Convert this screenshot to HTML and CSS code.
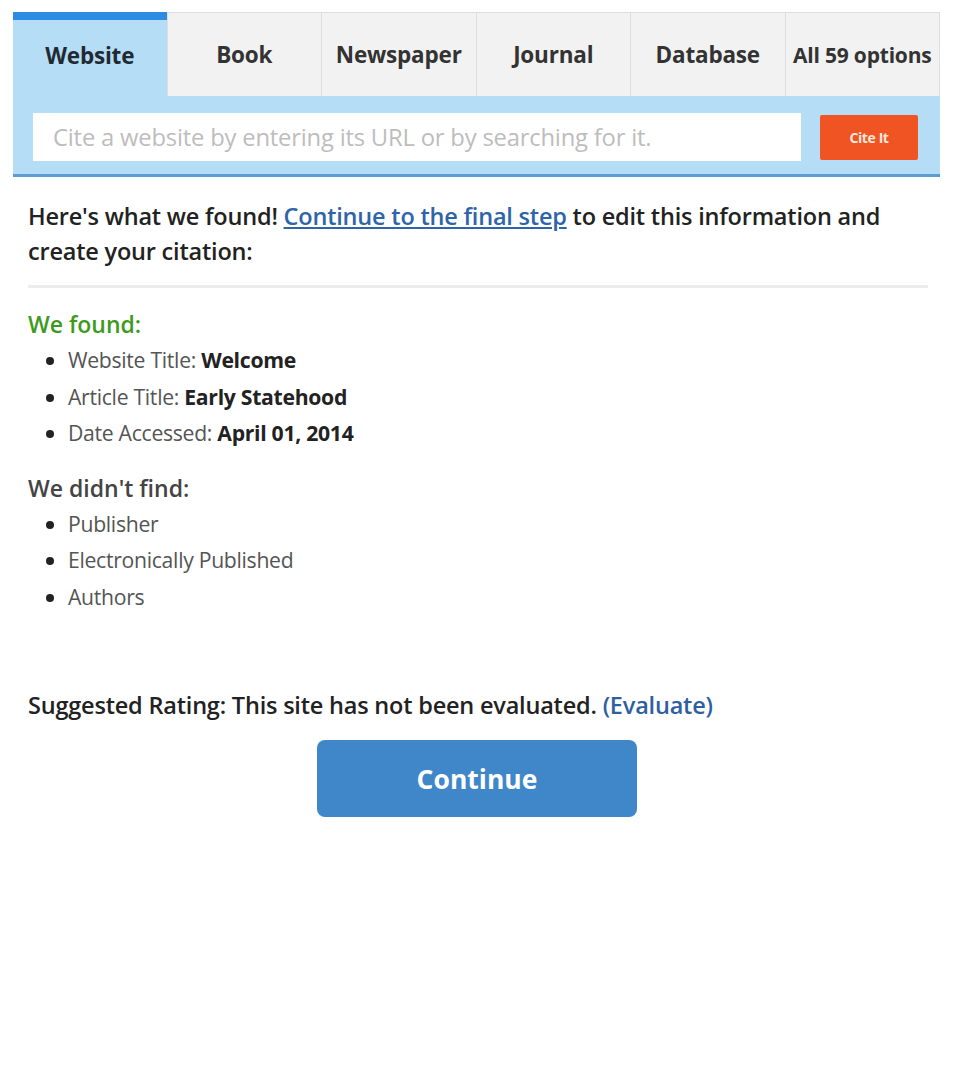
FILE: index.html
```html
<!DOCTYPE html>
<html>
<head>
<meta charset="utf-8">
<link rel="stylesheet" href="styles.css">
</head>
<body>
<div class="page">
  <div class="widget">
    <div class="tabs">
      <div class="tab active">Website</div>
      <div class="tab">Book</div>
      <div class="tab">Newspaper</div>
      <div class="tab">Journal</div>
      <div class="tab">Database</div>
      <div class="tab last">All 59 options</div>
    </div>
    <div class="panel">
      <div class="input">Cite a website by entering its URL or by searching for it.</div>
      <div class="cite">Cite It</div>
    </div>
  </div>
  <div class="content">
    <p class="intro">Here's what we found! <a href="#">Continue to the final step</a> to edit this information and create your citation:</p>
    <hr class="divider">
    <h3 class="found">We found:</h3>
    <ul class="list">
      <li>Website Title: <b>Welcome</b></li>
      <li>Article Title: <b>Early Statehood</b></li>
      <li>Date Accessed: <b>April 01, 2014</b></li>
    </ul>
    <h3 class="notfound">We didn't find:</h3>
    <ul class="list">
      <li>Publisher</li>
      <li>Electronically Published</li>
      <li>Authors</li>
    </ul>
    <p class="rating">Suggested Rating: This site has not been evaluated. <span class="eval">(Evaluate)</span></p>
    <div class="btnrow"><div class="continue">Continue</div></div>
  </div>
</div>
</body>
</html>
```
FILE: styles.css
```css
html, body {
  margin: 0;
  padding: 0;
  background: #fff;
}
body {
  font-family: "Open Sans", "Liberation Sans", sans-serif;
  color: #222;
}
.page {
  padding: 12px 40px 0 13px;
}
.widget {
  width: 927px;
}
.tabs {
  display: flex;
  height: 84px;
}
.tab {
  flex: 1;
  display: flex;
  align-items: center;
  justify-content: center;
  background: #f2f2f2;
  border-top: 1px solid #dedede;
  border-left: 1px solid #dedede;
  font-weight: 700;
  font-size: 22.5px;
  color: #333;
  letter-spacing: -0.2px;
}
.tab.last {
  border-right: 1px solid #dedede;
  font-size: 21px;
}
.tab.active {
  background: #b5ddf5;
  border-top: 8px solid #2d8be3;
  border-left: none;
  padding-bottom: 6px;
  color: #1f2a33;
}
.panel {
  display: flex;
  align-items: center;
  gap: 19px;
  background: #b5ddf5;
  padding: 17px 22px 13px 20px;
  border-bottom: 3px solid #5d9bd3;
}
.input {
  flex: 1;
  height: 48px;
  background: #fff;
  display: flex;
  align-items: center;
  padding-left: 20px;
  font-size: 23.8px;
  color: #bdbdbd;
  letter-spacing: -0.2px;
}
.cite {
  width: 98px;
  height: 45px;
  background: #f05423;
  border-radius: 2px;
  color: #fde8de;
  font-weight: 700;
  font-size: 14px;
  letter-spacing: -0.4px;
  display: flex;
  align-items: center;
  justify-content: center;
}
.content {
  padding: 0 12px 0 15px;
}
.intro {
  margin: 22px 0 0;
  font-size: 23.5px;
  line-height: 35px;
  font-weight: 600;
  color: #222;
  letter-spacing: -0.2px;
}
.intro a {
  color: #2e64a8;
  text-decoration: underline;
}
.divider {
  border: none;
  height: 3px;
  background: #ececec;
  margin: 16px 0 18px;
}
.found, .notfound {
  margin: 0;
  font-size: 23px;
  line-height: 36px;
  font-weight: 600;
}
.found {
  color: #3e9a1c;
}
.notfound {
  color: #444;
  margin-top: 18px;
}
.list {
  margin: 0;
  padding-left: 40px;
  list-style: disc;
  font-size: 21.2px;
  line-height: 36.5px;
  color: #555;
  letter-spacing: -0.3px;
}
.list li::marker {
  color: #222;
}
.list b {
  color: #222;
  font-weight: 700;
}
.rating {
  margin: 72px 0 0;
  font-size: 23.5px;
  font-weight: 600;
  line-height: 36px;
  color: #222;
  letter-spacing: -0.2px;
}
.eval {
  color: #2e5fa3;
}
.btnrow {
  display: flex;
  justify-content: center;
  margin-top: 17px;
  margin-right: 2px;
}
.continue {
  width: 320px;
  height: 77px;
  background: #3f87c9;
  border-radius: 8px;
  color: #fff;
  font-size: 26.5px;
  font-weight: 700;
  display: flex;
  align-items: center;
  justify-content: center;
}
```
